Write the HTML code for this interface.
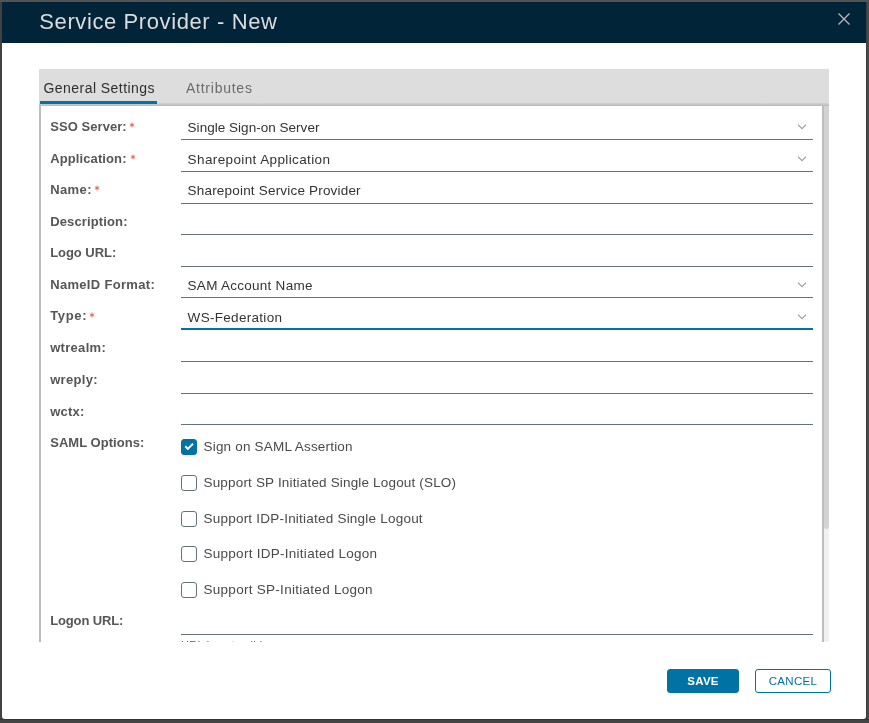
<!DOCTYPE html>
<html><head><meta charset="utf-8">
<style>
html,body{margin:0;padding:0;}
body{width:869px;height:723px;overflow:hidden;background:#505050;position:relative;font-family:"Liberation Sans",sans-serif;}
.shadow{position:absolute;left:0;top:719px;width:869px;height:4px;background:#444;}
.shadow:before{content:"";position:absolute;left:0;top:0;width:869px;height:1px;background:#353535;}
.modal{will-change:transform;position:absolute;left:2px;top:2px;width:864px;height:717px;background:#fff;border-radius:0 0 3px 3px;overflow:hidden;}
.hdr{position:absolute;left:0;top:0;width:864px;height:41px;background:#012438;}
.title{position:absolute;left:37.3px;top:7.3px;font-size:22px;letter-spacing:0.6px;color:#dcdcdc;white-space:nowrap;line-height:26px;}
.close{position:absolute;left:836px;top:11px;width:12px;height:12px;}
.tabs{position:absolute;left:37px;top:67px;width:790px;height:37px;background:#dddddd;}
.tab{position:absolute;top:10px;font-size:14px;line-height:18px;letter-spacing:0.45px;white-space:nowrap;}
.t1{left:4.5px;color:#2e2e2e;}
.t2{left:147px;color:#6c6c6c;letter-spacing:0.75px;}
.tabline{position:absolute;left:1px;top:32px;width:117px;height:3px;background:#0072a3;}
.tabsep{position:absolute;left:0;top:34px;width:790px;height:3px;background:linear-gradient(#d4d4d4,#c6c6c6 50%,#b9b9b9);}
.panel{position:absolute;left:37px;top:104px;width:790px;height:536px;overflow:hidden;}
.lborder{position:absolute;left:0;top:0;width:2px;height:536px;background:#bebebe;}
.sb{position:absolute;left:783px;top:0;width:7px;height:536px;}
.sbtrack{position:absolute;left:2px;top:0;width:5px;height:536px;background:#f1f1f1;border-radius:0 0 3px 3px;}
.sbthumb{position:absolute;left:2px;top:0;width:5px;height:423px;background:#d3d3d3;border-radius:0 0 3px 3px;}
.sbl{position:absolute;left:0;top:0;width:2px;height:536px;background:#bebebe;}
.lbl{position:absolute;left:11.2px;font-size:13px;font-weight:bold;color:#565656;white-space:nowrap;line-height:16px;}
.ast{position:absolute;}
.fld{position:absolute;left:142px;width:632px;height:1px;background:#627479;}
.val{position:absolute;left:148.6px;font-size:13.5px;color:#333;white-space:nowrap;line-height:17px;letter-spacing:0.19px;}
.caret{position:absolute;left:758px;width:10px;height:6px;}
.cb{position:absolute;left:142px;width:14px;height:14px;border:1px solid #627479;border-radius:3px;background:#fff;}
.cb.on{background:#0072a3;border-color:#0072a3;}
.cbl{position:absolute;left:164.5px;font-size:13.5px;color:#4a4a4a;white-space:nowrap;line-height:17px;letter-spacing:0.19px;}
.fld.focus{background:#0072a3;}
.errtxt{position:absolute;left:142px;font-size:11px;line-height:14px;color:#e62700;white-space:nowrap;letter-spacing:0.3px;}
.btn{position:absolute;top:667px;height:24px;box-sizing:border-box;border-radius:3px;font-size:11.5px;letter-spacing:0.3px;text-align:center;line-height:22px;}
.save{left:665px;width:72px;background:#0072a3;border:1px solid #0072a3;color:#fff;font-weight:bold;}
.cancel{left:753px;width:76px;background:#fff;border:1px solid #0072a3;color:#0072a3;}
</style></head><body>
<div class="shadow"></div>
<div style="position:absolute;left:0;top:0;width:869px;height:2px;background:#535353"></div>
<div style="position:absolute;left:0;top:2px;width:2px;height:717px;background:#414141"></div>
<div style="position:absolute;left:866px;top:2px;width:3px;height:717px;background:#4a4a4a;border-left:1px solid #3c3c3c;box-sizing:border-box"></div>
<div class="modal">
  <div class="hdr">
    <div class="title">Service Provider - New</div>
    <svg class="close" viewBox="0 0 12 12"><path d="M0.5 0.5L11.5 11.5M11.5 0.5L0.5 11.5" stroke="#b9b9b9" stroke-width="1.3" fill="none"/></svg>
  </div>
  <div class="tabs">
    <div class="tab t1">General Settings</div>
    <div class="tab t2">Attributes</div>
    <div class="tabsep"></div>
    <div class="tabline"></div>
  </div>
  <div class="panel">
    <div class="lborder"></div>
    <div class="lbl" style="top:13px;letter-spacing:0.06px">SSO Server:</div>
    <div class="fld" style="top:33px;height:1px"></div>
    <div class="val" style="top:13px;letter-spacing:0.025px">Single Sign-on Server</div>
    <svg class="caret" style="top:17.5px" viewBox="0 0 10 6"><path d="M1 0.7L5 4.7L9 0.7" stroke="#9a9a9a" stroke-width="1.1" fill="none"/></svg>
    <div class="lbl" style="top:45px;letter-spacing:0.11px">Application:</div>
    <div class="fld" style="top:65px;height:1px"></div>
    <div class="val" style="top:45px;letter-spacing:0.385px">Sharepoint Application</div>
    <svg class="caret" style="top:49.5px" viewBox="0 0 10 6"><path d="M1 0.7L5 4.7L9 0.7" stroke="#9a9a9a" stroke-width="1.1" fill="none"/></svg>
    <div class="lbl" style="top:76px;letter-spacing:0.4px">Name:</div>
    <div class="fld" style="top:97px;height:1px"></div>
    <div class="val" style="top:76px;letter-spacing:0.19px">Sharepoint Service Provider</div>
    <div class="lbl" style="top:108px;letter-spacing:0.13px">Description:</div>
    <div class="fld" style="top:128px;height:1px"></div>
    <div class="lbl" style="top:139px;letter-spacing:-0.05px">Logo URL:</div>
    <div class="fld" style="top:160px;height:1px"></div>
    <div class="lbl" style="top:171px;letter-spacing:0.32px">NameID Format:</div>
    <div class="fld" style="top:191px;height:1px"></div>
    <div class="val" style="top:171px;letter-spacing:0.27px">SAM Account Name</div>
    <svg class="caret" style="top:175.5px" viewBox="0 0 10 6"><path d="M1 0.7L5 4.7L9 0.7" stroke="#9a9a9a" stroke-width="1.1" fill="none"/></svg>
    <div class="lbl" style="top:202px;letter-spacing:0.67px">Type:</div>
    <div class="fld focus" style="top:222px;height:2px"></div>
    <div class="val" style="top:203px;letter-spacing:0.3px">WS-Federation</div>
    <svg class="caret" style="top:207.5px" viewBox="0 0 10 6"><path d="M1 0.7L5 4.7L9 0.7" stroke="#9a9a9a" stroke-width="1.1" fill="none"/></svg>
    <div class="lbl" style="top:234px;letter-spacing:0.3px">wtrealm:</div>
    <div class="fld" style="top:255px;height:1px"></div>
    <div class="lbl" style="top:266px;letter-spacing:0.32px">wreply:</div>
    <div class="fld" style="top:287px;height:1px"></div>
    <div class="lbl" style="top:298px;letter-spacing:0.25px">wctx:</div>
    <div class="fld" style="top:318px;height:1px"></div>
    <div class="lbl" style="top:329px;letter-spacing:0.04px">SAML Options:</div>
    <svg class="ast" style="left:89.9px;top:15.5px" width="6" height="6" viewBox="0 0 6 6"><path d="M3 0.5V5.5M0.8 1.75L5.2 4.25M0.8 4.25L5.2 1.75" stroke="#e84a3f" stroke-width="0.8"/></svg>
    <svg class="ast" style="left:90.9px;top:47.5px" width="6" height="6" viewBox="0 0 6 6"><path d="M3 0.5V5.5M0.8 1.75L5.2 4.25M0.8 4.25L5.2 1.75" stroke="#e84a3f" stroke-width="0.8"/></svg>
    <svg class="ast" style="left:55.4px;top:78.5px" width="6" height="6" viewBox="0 0 6 6"><path d="M3 0.5V5.5M0.8 1.75L5.2 4.25M0.8 4.25L5.2 1.75" stroke="#e84a3f" stroke-width="0.8"/></svg>
    <svg class="ast" style="left:50.4px;top:205.5px" width="6" height="6" viewBox="0 0 6 6"><path d="M3 0.5V5.5M0.8 1.75L5.2 4.25M0.8 4.25L5.2 1.75" stroke="#e84a3f" stroke-width="0.8"/></svg>
    <div class="cb on" style="top:333px"><svg width="14" height="14" viewBox="0 0 14 14" style="position:absolute;left:0;top:0"><path d="M3.3 6.3L5.8 8.9L11 3.8" stroke="#fff" stroke-width="2" fill="none"/></svg></div>
    <div class="cbl" style="top:332px;letter-spacing:0.19px">Sign on SAML Assertion</div>
    <div class="cb" style="top:369px"></div>
    <div class="cbl" style="top:368px;letter-spacing:0.17px">Support SP Initiated Single Logout (SLO)</div>
    <div class="cb" style="top:405px"></div>
    <div class="cbl" style="top:404px;letter-spacing:0.22px">Support IDP-Initiated Single Logout</div>
    <div class="cb" style="top:440px"></div>
    <div class="cbl" style="top:439px;letter-spacing:0.27px">Support IDP-Initiated Logon</div>
    <div class="cb" style="top:476px"></div>
    <div class="cbl" style="top:475px;letter-spacing:0.28px">Support SP-Initiated Logon</div>
    <div class="lbl" style="top:507px;letter-spacing:-0.13px">Logon URL:</div>
    <div class="fld" style="top:528px"></div>
    <div class="errtxt" style="top:532px">URL is not valid</div>
    <div class="sb"><div class="sbtrack"></div><div class="sbthumb"></div><div class="sbl"></div></div>
  </div>
  <div class="footer">
    <div class="btn save">SAVE</div>
    <div class="btn cancel">CANCEL</div>
  </div>
</div>
</body></html>
